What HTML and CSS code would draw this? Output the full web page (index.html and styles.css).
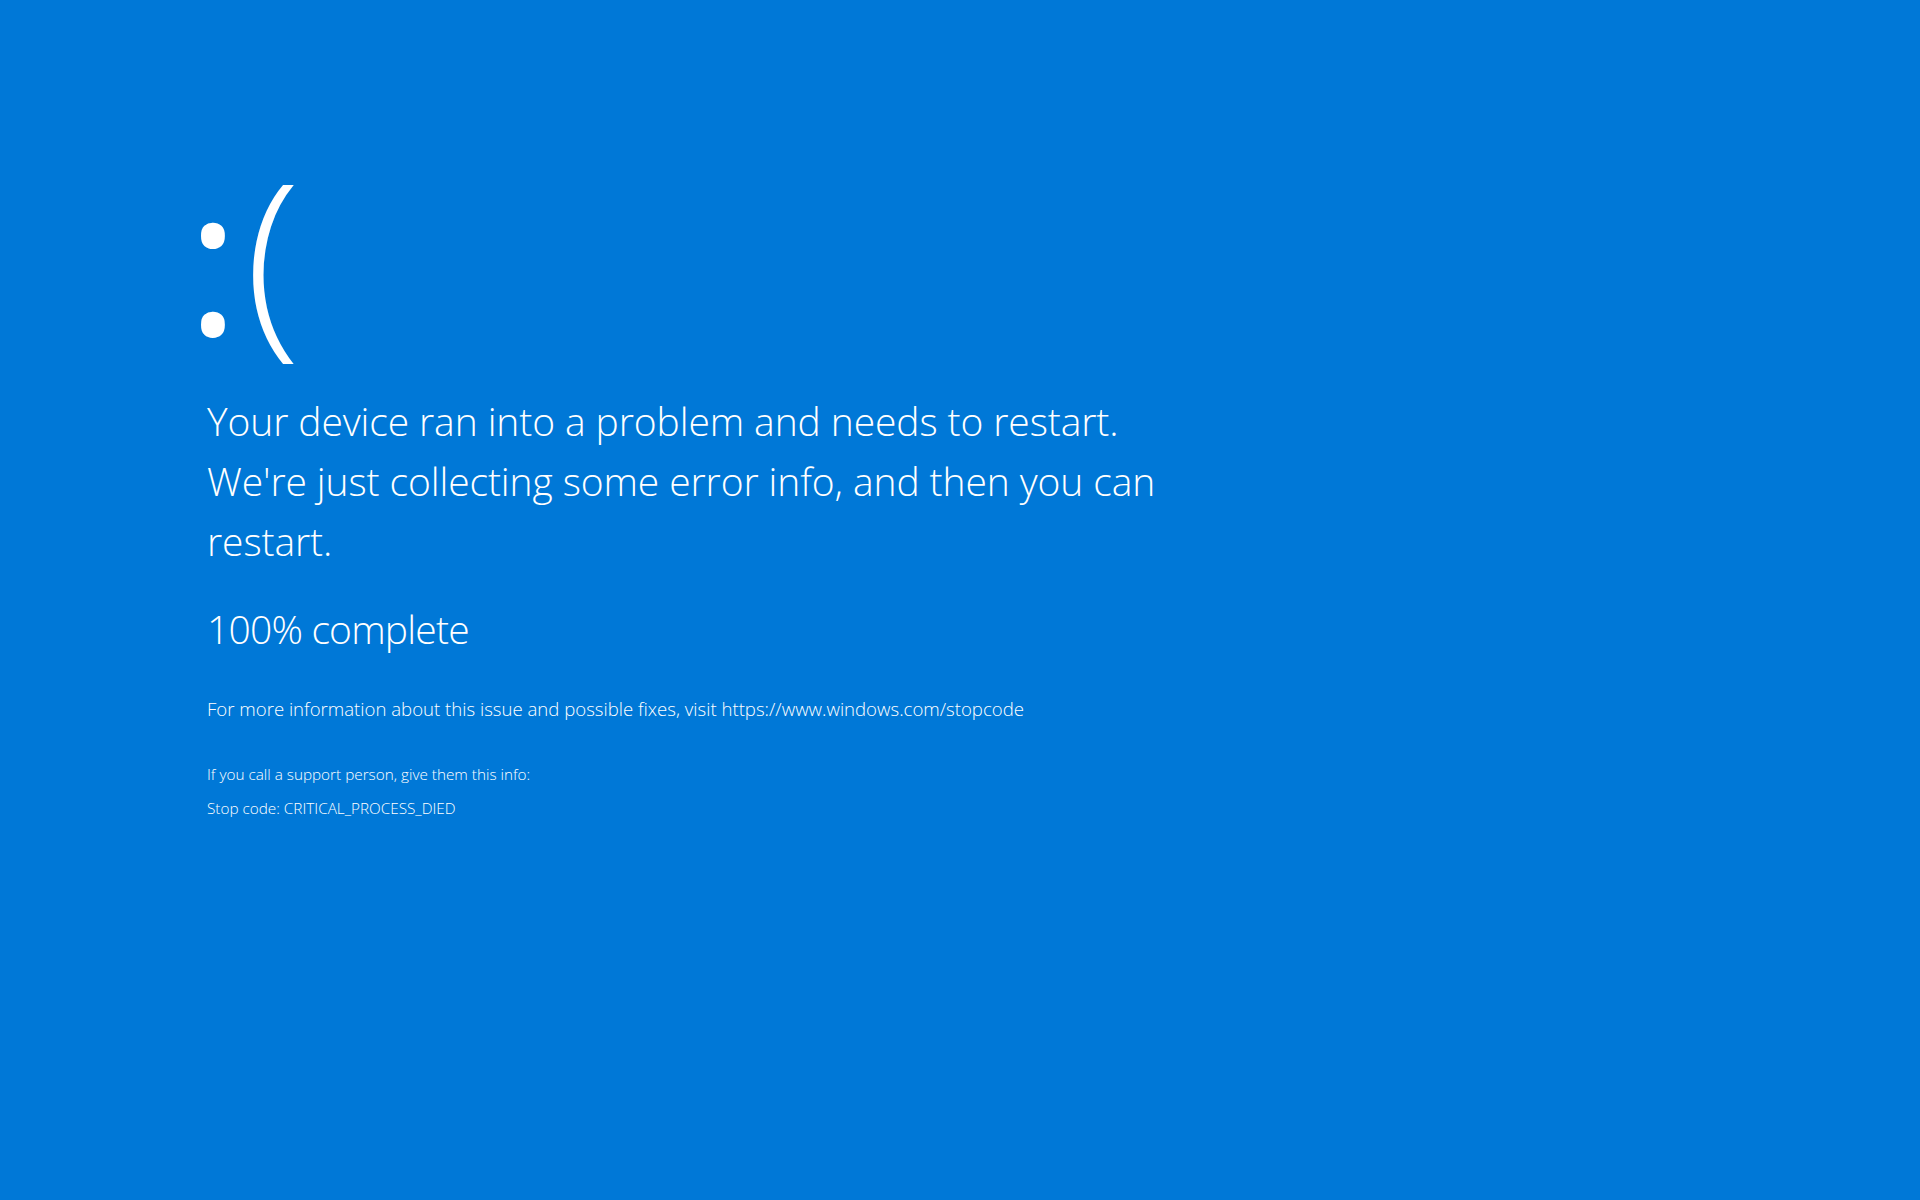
FILE: index.html
```html
<!DOCTYPE html>
<html lang="en">
<head>
<meta charset="utf-8">
<title>Your device ran into a problem</title>
<link rel="stylesheet" href="styles.css">
</head>
<body>
<main class="screen">
  <div class="face"><span class="eyes">:</span><span class="mouth">(</span></div>
  <p class="headline">Your device ran into a problem and needs to restart. We're just collecting some error info, and then you can restart.</p>
  <p class="progress">100% complete</p>
  <p class="info">For more information about this issue and possible fixes, visit https://www.windows.com/stopcode</p>
  <p class="support">If you call a support person, give them this info:</p>
  <p class="stopcode">Stop code: CRITICAL_PROCESS_DIED</p>
</main>
</body>
</html>
```

FILE: styles.css
```css
html, body {
  margin: 0;
  padding: 0;
  background: #0078d7;
}

body {
  width: 1920px;
  height: 1200px;
  overflow: hidden;
  color: #ffffff;
  font-family: "Open Sans", "Liberation Sans", sans-serif;
  font-weight: 300;
}

.screen {
  display: flex;
  flex-direction: column;
  align-items: flex-start;
  padding: 150px 0 0 207px;
}

.screen p {
  margin: 0;
}

.face {
  font-size: 205px;
  line-height: 205px;
  height: 205px;
  margin-left: -21px;
  white-space: nowrap;
}

.eyes {
  font-weight: 400;
  letter-spacing: 5px;
  position: relative;
  top: 3px;
}

.mouth {
  font-weight: 300;
}

.headline {
  margin-top: 36px !important;
  max-width: 980px;
  font-size: 39px;
  line-height: 60px;
  letter-spacing: -0.1px;
}

.progress {
  margin-top: 28px !important;
  font-size: 39px;
  line-height: 60px;
  letter-spacing: -0.8px;
}

.info {
  margin-top: 36px !important;
  font-size: 18.6px;
  line-height: 28px;
}

.support {
  margin-top: 39px !important;
  font-size: 15.3px;
  line-height: 24px;
}

.stopcode {
  margin-top: 10px !important;
  font-size: 15.3px;
  line-height: 24px;
}
```
